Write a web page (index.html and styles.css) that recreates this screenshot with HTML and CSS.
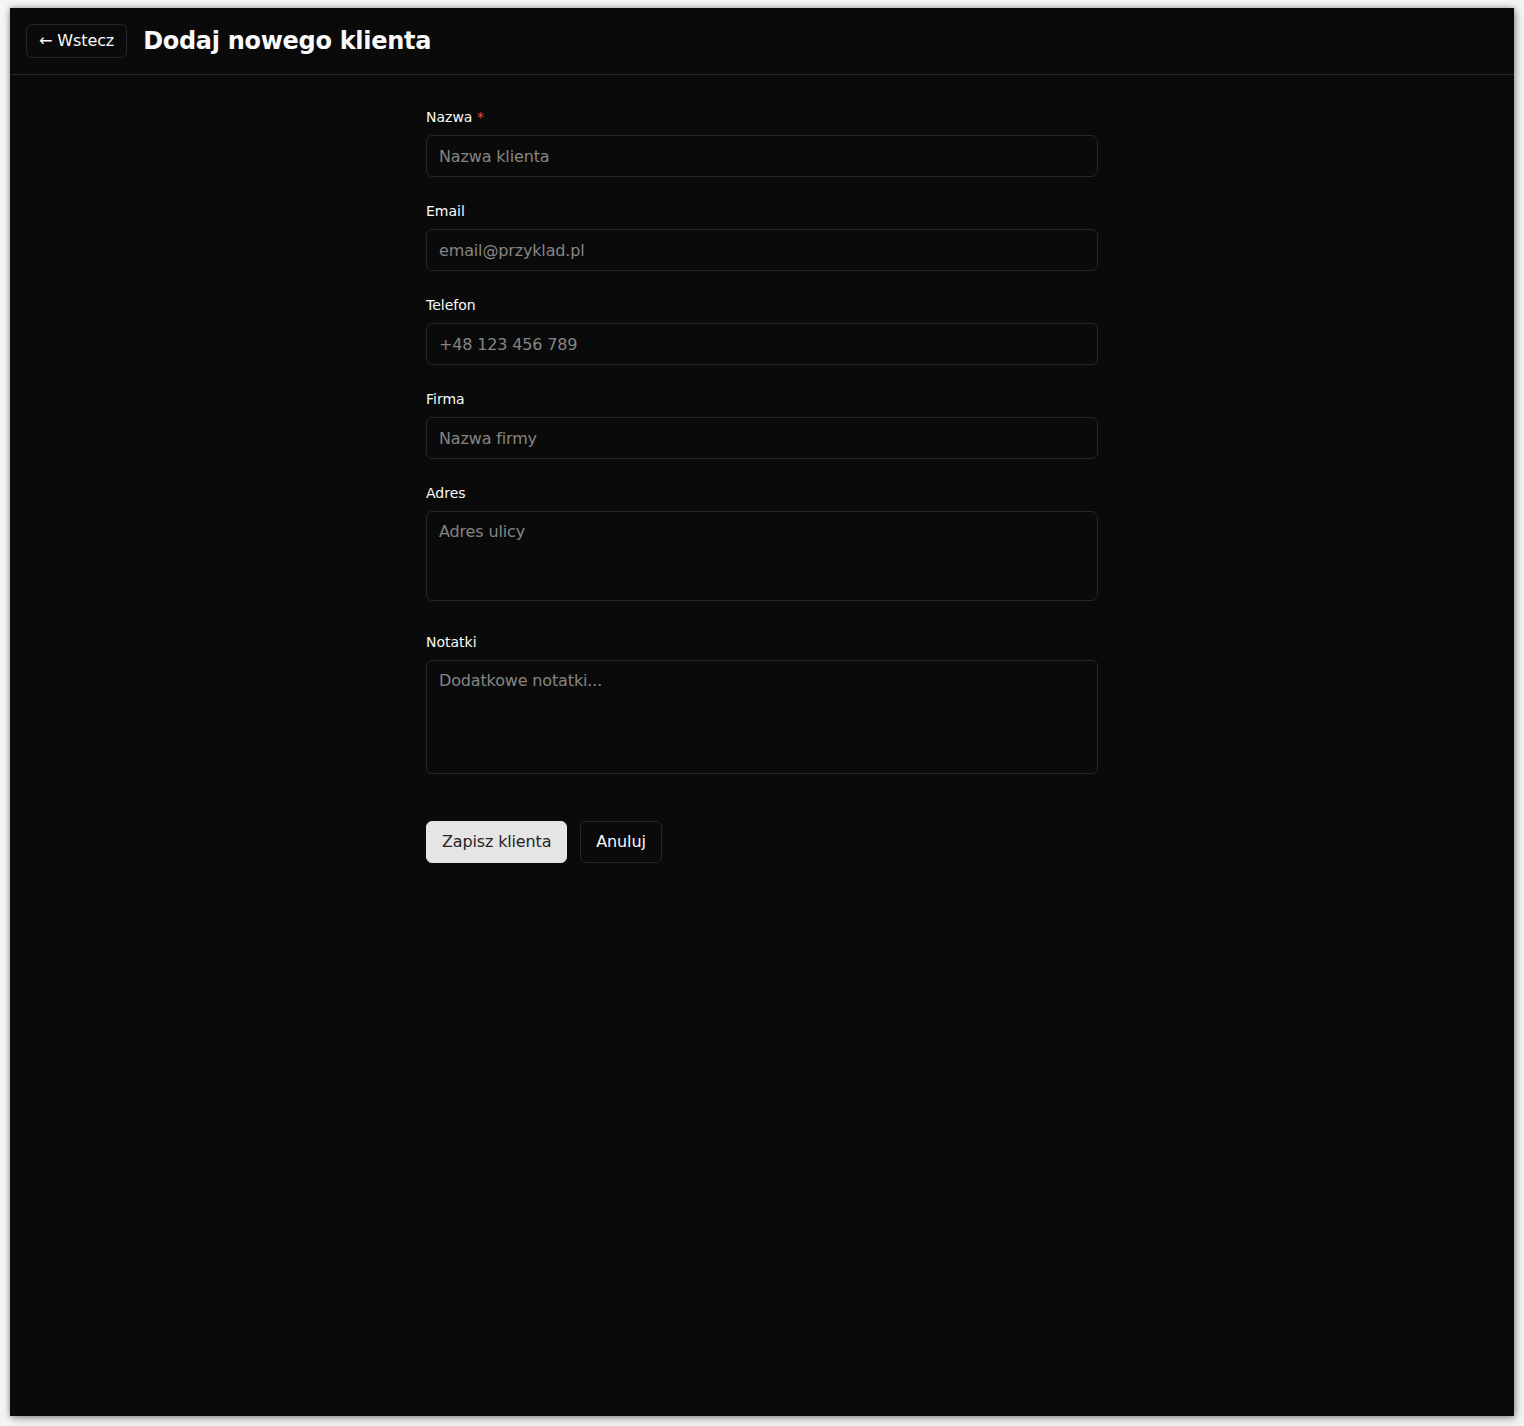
FILE: index.html
```html
<!DOCTYPE html>
<html lang="pl">
<head>
<meta charset="utf-8">
<title>Dodaj nowego klienta</title>
<link rel="stylesheet" href="styles.css">
</head>
<body>
<div class="window">
  <header class="topbar">
    <button class="back-btn" type="button">← Wstecz</button>
    <h1 class="title">Dodaj nowego klienta</h1>
  </header>
  <main class="content">
    <form class="form">
      <div class="field">
        <label class="label">Nazwa <span class="req">*</span></label>
        <input class="input" type="text" placeholder="Nazwa klienta">
      </div>
      <div class="field">
        <label class="label">Email</label>
        <input class="input" type="email" placeholder="email@przyklad.pl">
      </div>
      <div class="field">
        <label class="label">Telefon</label>
        <input class="input" type="tel" placeholder="+48 123 456 789">
      </div>
      <div class="field">
        <label class="label">Firma</label>
        <input class="input" type="text" placeholder="Nazwa firmy">
      </div>
      <div class="field field-area">
        <label class="label">Adres</label>
        <textarea class="input textarea textarea-sm" placeholder="Adres ulicy"></textarea>
      </div>
      <div class="field field-area">
        <label class="label">Notatki</label>
        <textarea class="input textarea textarea-lg" placeholder="Dodatkowe notatki..."></textarea>
      </div>
      <div class="actions">
        <button class="btn btn-primary" type="button">Zapisz klienta</button>
        <button class="btn btn-outline" type="button">Anuluj</button>
      </div>
    </form>
  </main>
</div>
</body>
</html>
```

FILE: styles.css
```css
* { box-sizing: border-box; }

html, body {
  margin: 0;
  padding: 0;
}

body {
  background: #f4f4f4;
  font-family: "DejaVu Sans", Verdana, sans-serif;
  padding: 8px 10px 10px 10px;
}

.window {
  background: #0a0a0a;
  height: 1408px;
  color: #fafafa;
  box-shadow: 0 0 6px rgba(0, 0, 0, 0.35), 2px 3px 8px rgba(0, 0, 0, 0.25);
}

.topbar {
  display: flex;
  align-items: center;
  gap: 16px;
  height: 67px;
  padding: 0 16px;
  border-bottom: 1px solid #262626;
}

.back-btn {
  height: 34px;
  padding: 0 12px;
  background: #0a0a0a;
  color: #fafafa;
  border: 1px solid #262626;
  border-radius: 6px;
  font-family: inherit;
  font-size: 16px;
  letter-spacing: -0.1px;
  line-height: 1;
}

.title {
  margin: 0;
  font-size: 24px;
  font-weight: bold;
  line-height: 32px;
  letter-spacing: -0.3px;
  color: #fafafa;
}

.content {
  display: flex;
  justify-content: center;
  padding-top: 32px;
}

.form {
  width: 672px;
  display: flex;
  flex-direction: column;
}

.field {
  display: flex;
  flex-direction: column;
  gap: 8px;
  margin-bottom: 24px;
}

.field-area {
  margin-bottom: 31px;
}

.label {
  font-size: 14px;
  line-height: 20px;
  color: #fafafa;
}

.req {
  color: #ef4444;
}

.input {
  display: block;
  width: 100%;
  height: 42px;
  padding: 0 12px;
  background: #0a0a0a;
  border: 1px solid #262626;
  border-radius: 6px;
  color: #fafafa;
  font-family: inherit;
  font-size: 16px;
  letter-spacing: -0.15px;
  outline: none;
}

.input::placeholder {
  color: #858585;
}

.textarea {
  padding: 8px 12px;
  line-height: 24px;
  resize: none;
}

.textarea-sm { height: 90px; }
.textarea-lg { height: 114px; }

.actions {
  display: flex;
  gap: 13px;
  margin-top: 16px;
}

.btn {
  height: 42px;
  padding: 0 15px;
  border-radius: 6px;
  font-family: inherit;
  font-size: 16px;
  letter-spacing: -0.15px;
  line-height: 1;
}

.btn-primary {
  background: #e5e5e5;
  color: #262626;
  border: 1px solid #e5e5e5;
}

.btn-outline {
  background: #0a0a0a;
  color: #fafafa;
  border: 1px solid #262626;
}
```
